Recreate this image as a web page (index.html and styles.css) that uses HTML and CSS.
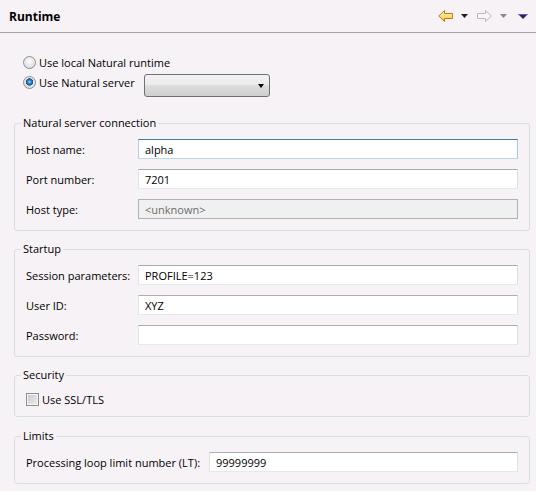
FILE: index.html
```html
<!DOCTYPE html>
<html lang="en">
<head>
  <meta charset="UTF-8">
  <title>Runtime</title>
  <link rel="stylesheet" href="styles.css">
</head>
<body>
  <div class="page-header">
    <h1 class="page-title">Runtime</h1>
    <div class="toolbar">
      <span class="tool back">
        <svg width="15" height="12" viewBox="0 0 15 12">
          <defs>
            <linearGradient id="yel" x1="0" y1="0" x2="0" y2="1">
              <stop offset="0" stop-color="#fff7c8"/>
              <stop offset="1" stop-color="#f3c23c"/>
            </linearGradient>
          </defs>
          <path d="M0.7 6 L6.5 0.5 V3.5 H14.5 V8.5 H6.5 V11.5 Z" fill="url(#yel)" stroke="#b77d12"/>
        </svg>
      </span>
      <span class="tool drop">
        <svg width="7" height="4" viewBox="0 0 7 4"><path d="M0 0H7L3.5 4Z" fill="#1e1e1e"/></svg>
      </span>
      <span class="tool forward">
        <svg width="15" height="12" viewBox="0 0 15 12">
          <path d="M14.3 6 L8.5 0.5 V3.5 H0.5 V8.5 H8.5 V11.5 Z" fill="#f6f6f6" stroke="#b8b8b8"/>
        </svg>
      </span>
      <span class="tool drop-off">
        <svg width="7" height="4" viewBox="0 0 7 4"><path d="M0 0H7L3.5 4Z" fill="#8a8a8a"/></svg>
      </span>
      <span class="tool menu">
        <svg width="10" height="5" viewBox="0 0 10 5"><path d="M0 0H10L5 5Z" fill="#2c2163"/><path d="M1 0.5H9" stroke="#6b52c4" stroke-width="1"/></svg>
      </span>
    </div>
  </div>

  <div class="content">
    <div class="mode">
      <label class="radio-row"><input type="radio" name="mode"> Use local Natural runtime</label>
      <div class="server-row">
        <label class="radio-row"><input type="radio" name="mode" checked> Use Natural server</label>
        <div class="combo"><span class="combo-arrow"></span></div>
      </div>
    </div>

    <fieldset class="group first">
      <legend>Natural server connection</legend>
      <div class="fields">
        <label>Host name:</label>
        <input type="text" class="focused" value="alpha">
        <label>Port number:</label>
        <input type="text" value="7201">
        <label>Host type:</label>
        <input type="text" value="&lt;unknown&gt;" disabled>
      </div>
    </fieldset>

    <fieldset class="group">
      <legend>Startup</legend>
      <div class="fields">
        <label>Session parameters:</label>
        <input type="text" value="PROFILE=123">
        <label>User ID:</label>
        <input type="text" value="XYZ">
        <label>Password:</label>
        <input type="password" value="">
      </div>
    </fieldset>

    <fieldset class="group security">
      <legend>Security</legend>
      <label class="check-row"><input type="checkbox"> Use SSL/TLS</label>
    </fieldset>

    <fieldset class="group limits">
      <legend>Limits</legend>
      <div class="fields wide">
        <label>Processing loop limit number (LT):</label>
        <input type="text" value="99999999">
      </div>
    </fieldset>
  </div>
</body>
</html>
```
FILE: styles.css
```css
* {
  box-sizing: border-box;
}
body {
  margin: 0;
  background-color: #f6f2f6;
  font-family: "Open Sans", "Liberation Sans", sans-serif;
  font-size: 11px;
  color: #000;
}
.page-header {
  height: 33px;
  display: flex;
  align-items: center;
  padding: 0 8px 0 9px;
  border-bottom: 1px solid #a4a4a4;
}
.page-title {
  flex: 1;
  margin: 0;
  font-size: 12px;
  font-weight: bold;
}
.toolbar {
  display: flex;
  align-items: center;
}
.tool svg {
  display: block;
}
.drop {
  margin-left: 8px;
}
.forward {
  margin-left: 9px;
}
.drop-off {
  margin-left: 8px;
}
.menu {
  margin-left: 11px;
}
.content {
  padding-top: 19px;
}
.mode {
  padding-left: 23px;
}
.radio-row,
.check-row {
  display: flex;
  align-items: center;
  gap: 3px;
  height: 20px;
}
.server-row {
  display: flex;
  align-items: flex-start;
}
input[type="radio"] {
  appearance: none;
  margin: 0;
  width: 13px;
  height: 13px;
  border: 1px solid #8e8f8f;
  border-radius: 50%;
  background: radial-gradient(circle at 50% 40%, #fdfdfd, #d3d3d3);
}
input[type="radio"]:checked {
  background:
    radial-gradient(circle at 50% 45%, #9be0ff 0, #2f8fd0 1.6px, #174f88 3.4px, transparent 4px),
    radial-gradient(circle at 50% 40%, #fdfdfd, #d3d3d3);
}
input[type="checkbox"] {
  appearance: none;
  margin: 0;
  width: 13px;
  height: 13px;
  border: 1px solid #8e8f8f;
  background: linear-gradient(135deg, #c4c8cd, #f0f0f1);
  box-shadow: inset 0 0 0 1px #f6f6f6;
}
.combo {
  margin: 2px 0 0 9px;
  width: 126px;
  height: 23px;
  border: 1px solid #707070;
  border-radius: 3px;
  background: linear-gradient(#f2f2f2, #ebebeb 50%, #dddddd 50%, #cfcfcf);
  display: flex;
  align-items: center;
  justify-content: flex-end;
  padding-right: 5px;
}
.combo-arrow {
  width: 0;
  height: 0;
  border-left: 3.5px solid transparent;
  border-right: 3.5px solid transparent;
  border-top: 4px solid #000;
}
.group {
  margin: 10px 6px 0 14px;
  padding: 8px 0 11px;
  border: 1px solid #d5dfe5;
  border-radius: 3px;
  min-width: 0;
}
.group.first {
  margin-top: 18px;
}
.group legend {
  margin-left: 6px;
  padding: 0 2px;
  line-height: 16px;
}
.fields {
  display: grid;
  grid-template-columns: 112px 1fr;
  row-gap: 10px;
  align-items: center;
  padding: 0 11px;
}
.fields.wide {
  grid-template-columns: 183px 1fr;
}
.fields input {
  width: 100%;
  height: 20px;
  margin: 0;
  padding: 0 6px;
  font: inherit;
  color: #000;
  background: #fff;
  border: 1px solid;
  border-color: #abadb3 #dbdfe6 #e3e9ef #e2e3ea;
  outline: none;
}
.fields input.focused {
  border-color: #3d7bad #a4c9e3 #b7d9ed #b5cfe7;
}
.fields input:disabled {
  background: #f0f0f0;
  color: #6d6d6d;
  border-color: #adb2b5;
}
.security {
  padding: 6px 0 7px;
}
.check-row {
  padding-left: 11px;
}
.limits {
  margin-top: 11px;
}
```
